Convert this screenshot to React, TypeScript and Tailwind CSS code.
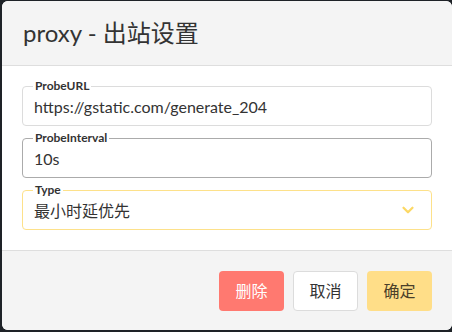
import { ChevronDown } from "lucide-react";

const FONT = { fontFamily: '"Segoe UI", Lato, "Noto Sans CJK SC", sans-serif' };

function Field({ label, value, tone }: { label: string; value: string; tone: "plain" | "focus" | "accent" }) {
  const border = tone === "accent" ? "border-[#fde18a]" : tone === "focus" ? "border-[#ababab]" : "border-[#dcdcdc]";
  return (
    <div className={`relative h-[40px] rounded-[4px] border ${border} flex items-center pl-[11px] pr-[14px]`}>
      <span className="absolute -top-[9px] left-[10px] bg-white px-[2px] text-[12px] leading-4 font-bold text-[#333]">{label}</span>
      <span className="flex-1 pt-[2px] text-[16px] text-[#333]">{value}</span>
      {tone === "accent" && <ChevronDown className="w-[18px] h-[18px] text-[#fcd865]" strokeWidth={3} />}
    </div>
  );
}

export default function App() {
  return (
    <div className="w-[452px] h-[332px] bg-[#1e2227] pl-[2px] pt-[1px] overflow-hidden" style={FONT}>
      <div className="w-[450px] h-[329px] rounded-[6px] bg-white overflow-hidden flex flex-col">
        <div className="h-[65px] shrink-0 bg-[#f4f4f4] border-b border-[#dedede] flex items-center px-[21px]">
          <h1 className="text-[24px] text-[#333] leading-none pb-[1px]">proxy - 出站设置</h1>
        </div>
        <div className="flex flex-col gap-[12px] px-[20px] pt-[20px] pb-[20px]">
          <Field label="ProbeURL" value="https://gstatic.com/generate_204" tone="plain" />
          <Field label="ProbeInterval" value="10s" tone="focus" />
          <Field label="Type" value="最小时延优先" tone="accent" />
        </div>
        <div className="flex-1 bg-[#f4f4f4] border-t border-[#dedede] flex items-start justify-end gap-[9px] pt-[20px] pr-[20px]">
          <button type="button" className="w-[65px] h-[40px] rounded-[4px] bg-[#ff7970] text-white text-[16px]">删除</button>
          <button type="button" className="w-[65px] h-[40px] rounded-[4px] bg-white border border-[#dcdcdc] text-[#333] text-[16px]">取消</button>
          <button type="button" className="w-[65px] h-[40px] rounded-[4px] bg-[#ffde88] text-[#4a3f2a] text-[16px]">确定</button>
        </div>
      </div>
    </div>
  );
}
